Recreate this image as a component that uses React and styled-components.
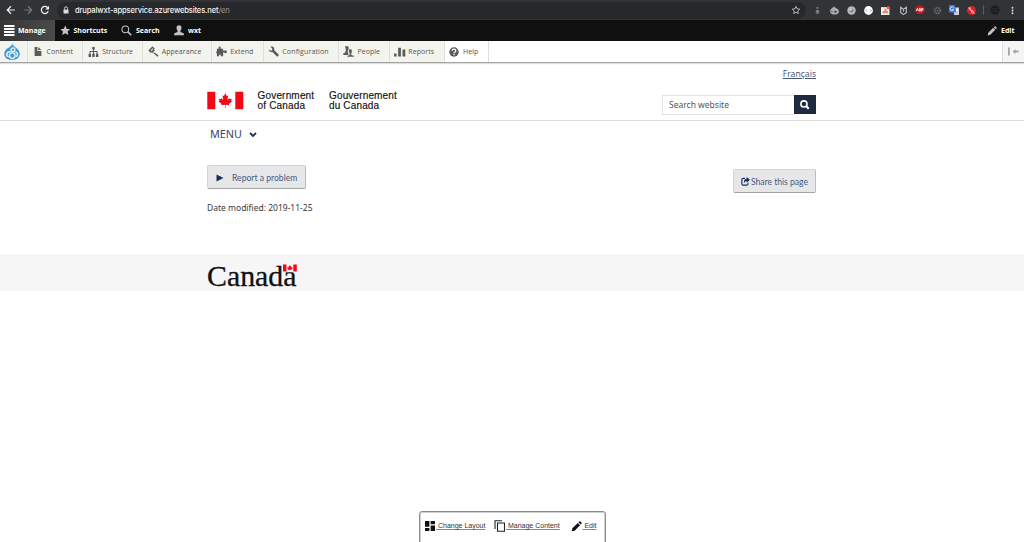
import React from "react";
import styled, { createGlobalStyle } from "styled-components";

const Global = createGlobalStyle`
  * { box-sizing: border-box; }
  html, body { margin: 0; padding: 0; background: #fff; }
  body { width: 1024px; height: 542px; overflow: hidden; font-family: "Noto Sans", sans-serif; color: #333; }
  a { color: inherit; }
  svg { display: block; flex: none; }
`;

const Page = styled.div`
  position: relative;
  display: flex;
  flex-direction: column;
  width: 1024px;
  height: 542px;
`;

const Label = styled.span`
  white-space: nowrap;
  letter-spacing: ${(p) => p.$track || 0}px;
`;

/* Browser chrome */
const BrowserBar = styled.div`
  display: flex;
  align-items: center;
  height: 20px;
  background: #323337;
  padding-left: 6px;
`;
const NavIcons = styled.div`
  display: flex;
  gap: 7px;
  width: 51px;
`;
const AddressBar = styled.div`
  display: flex;
  align-items: center;
  width: 749px;
  height: 17px;
  border-radius: 9px;
  background: #27282b;
  padding: 0 6px 0 6px;
  color: #9a9b9e;
  font: 7.6px/17px Inter, "Liberation Sans", sans-serif;
`;
const Host = styled.span`
  color: #f4f4f4;
  font-weight: 500;
  margin-left: 6px;
`;
const StarSlot = styled.div`
  margin-left: auto;
`;
const Extensions = styled.div`
  display: flex;
  align-items: center;
  margin-left: 3px;
`;
const ExtensionSlot = styled.div`
  display: flex;
  justify-content: center;
  width: ${(p) => p.$w || 17.1}px;
`;

/* Admin toolbar */
const AdminBar = styled.nav`
  display: flex;
  align-items: stretch;
  height: 21px;
  background: #101010;
  color: #fff;
  font: 700 7px/20px "Open Sans", sans-serif;
`;
const AdminTab = styled.div`
  display: flex;
  align-items: center;
  gap: ${(p) => p.$gap || 3}px;
  width: ${(p) => p.$w}px;
  padding-left: ${(p) => p.$pad || 0}px;
  margin-left: ${(p) => (p.$end ? "auto" : 0)};
  background: ${(p) => (p.$active ? "linear-gradient(90deg, #363636, #4a4a4a)" : "none")};
`;
const Tray = styled.nav`
  display: flex;
  height: 22px;
  background: #fff;
  border-bottom: 1px solid #a4a4a4;
  box-shadow: 0 1px 1px #ddd;
  color: #555;
  font: 7px/20px "Open Sans", sans-serif;
`;
const TrayItem = styled.div`
  display: flex;
  align-items: center;
  gap: ${(p) => p.$gap || 4}px;
  width: ${(p) => p.$w}px;
  padding-left: ${(p) => p.$pad}px;
  background: ${(p) => (p.$plain ? "#fff" : "#f3f4ee")};
  border-right: 1px solid #dfdfdc;
`;
const TrayToggle = styled.div`
  display: flex;
  align-items: center;
  justify-content: center;
  width: 22px;
  margin-left: auto;
  background: #f5f5f5;
  border-left: 1px solid #ddd;
`;

/* Site */
const Header = styled.header`
  height: 58px;
  border-bottom: 1px solid #dedede;
  padding: 0 208px 0 207px;
`;
const LanguageRow = styled.div`
  display: flex;
  justify-content: flex-end;
  height: 22px;
  padding-top: 5px;
  color: #4a5875;
  font: 8.6px/12px "Noto Sans", sans-serif;
`;
const BrandRow = styled.div`
  display: flex;
  height: 30px;
  padding-top: 6px;
`;
const BrandText = styled.div`
  width: ${(p) => p.$w}px;
  color: #111;
  font: 10px/10px "Liberation Sans", sans-serif;
  -webkit-text-stroke: 0.15px #111;
`;
const FlagSlot = styled.div`
  width: 50.5px;
`;
const SearchForm = styled.form`
  display: flex;
  margin: 4px 0 0 auto;
  height: 20px;
`;
const SearchField = styled.div`
  width: 132px;
  border: 1px solid #e2e2e2;
  border-right: 0;
  padding-left: 6px;
  color: #555;
  font: 8.5px/17px "Noto Sans", sans-serif;
`;
const SearchButton = styled.div`
  display: flex;
  align-items: center;
  justify-content: center;
  width: 22px;
  height: 19px;
  background: #1f2940;
`;
const MenuRow = styled.div`
  display: flex;
  align-items: center;
  gap: 7px;
  height: 27px;
  padding-left: 210px;
  color: #34446a;
  font: 10.8px/26px "Noto Sans", sans-serif;
`;
const MenuLabel = styled.div`
  padding-bottom: 1px;
  line-height: 24px;
`;
const Main = styled.main`
  height: 106px;
  padding: 17px 208px 0 207px;
`;
const Actions = styled.div`
  display: flex;
  justify-content: space-between;
  align-items: flex-start;
`;
const Button = styled.div`
  display: flex;
  align-items: center;
  gap: ${(p) => p.$gap}px;
  width: ${(p) => p.$w}px;
  height: 24px;
  margin-top: ${(p) => p.$drop || 0}px;
  padding: 1px 0 0 ${(p) => p.$pad}px;
  background: #e6e7e9;
  border: 1px solid #d4d5d7;
  border-right-color: #bcbcbe;
  border-bottom-color: #a5a5a7;
  border-radius: 2px;
  color: #4a5a80;
  font: 8.6px/20px Lato, sans-serif;
`;
const Modified = styled.div`
  margin-top: 9px;
  color: #383838;
  font: 8.5px/12px "Noto Sans", sans-serif;
`;
const Footer = styled.footer`
  height: 37px;
  padding: 2px 0 0 207px;
  background: #f6f6f6;
`;

/* Floating layout toolbar */
const LayoutBar = styled.div`
  position: absolute;
  left: 419px;
  top: 511px;
  display: flex;
  align-items: center;
  width: 187px;
  height: 33px;
  padding: 0 0 3px 5px;
  border: 1px solid #8c8c8c;
  border-radius: 3px 3px 0 0;
  box-shadow: inset 0 0 0 1px #d0d0d0;
  background: #fff;
  color: #333;
  font: 7px/10px "Liberation Sans", sans-serif;
`;
const LayoutAction = styled.div`
  display: flex;
  align-items: center;
  gap: ${(p) => p.$gap}px;
  width: ${(p) => p.$w}px;
`;
const LayoutLink = styled.a`
  text-decoration: underline;
  text-decoration-color: #888;
  text-underline-offset: 1px;
  white-space: pre;
`;

const Icon = ({ w = 10, h, box = "0 0 16 16", fill = "#5a5a5a", children }) => (
  <svg width={w} height={h || w} viewBox={box} fill={fill}>{children}</svg>
);
const Arrow = ({ flip, color }) => (
  <Icon w={10} fill="none">
    <path d={flip ? "M2 8h12M8 2l6 6-6 6" : "M14 8H2M8 2L2 8l6 6"} stroke={color} strokeWidth="1.9" />
  </Icon>
);
const Reload = () => (
  <Icon w={10} fill="none">
    <path d="M13.2 10A5.7 5.7 0 1 1 12.6 4.7" stroke="#eee" strokeWidth="2" />
    <path d="M14.5 1v6h-6z" fill="#eee" />
  </Icon>
);
const Lock = () => (
  <Icon w={6} h={8} box="0 0 12 16" fill="#ddd">
    <path d="M1 7h10v8H1z" /><path d="M3 7V4.5a3 3 0 0 1 6 0V7" fill="none" stroke="#ddd" strokeWidth="1.7" />
  </Icon>
);
const STAR = "M8 .8l2.2 4.9 5.3.6-4 3.6 1.1 5.3L8 12.5l-4.6 2.7 1.1-5.3-4-3.6 5.3-.6z";
const Star = ({ outline }) => (
  <Icon w={outline ? 8 : 10.5} fill={outline ? "none" : "#c2c2c2"}>
    <path d={STAR} stroke={outline ? "#ddd" : "none"} strokeWidth="1.5" />
  </Icon>
);
const Pencil = ({ fill, w = 11 }) => (
  <Icon w={w} fill={fill}><path d="M1 15l1-4.3 7.9-7.9 3.3 3.3L5.3 14zM10.8 1.9L12 .8q.9-.8 1.8 0l1.4 1.4q.9.9 0 1.8l-1.1 1.1z" /></Icon>
);
const MapleLeaf = ({ x, y, s }) => (
  <path
    transform={`translate(${x} ${y}) scale(${s})`}
    fill="#f00a16"
    d="M0-68L-11-44Q-14-40-19-43L-27-47-20-12Q-18-4-24-9L-36-23-40-14Q-41-11-44-12L-60-15-55 1Q-54 4-58 6L-64 9-37 31Q-34 34-35 38L-38 46-5 41Q-2 41-2 44L-3 70H3L2 44Q2 41 5 41L38 46 35 38Q34 34 37 31L64 9 58 6Q54 4 55 1L60-15 44-12Q41-11 40-14L36-23 24-9Q18-4 20-12L27-47 19-43Q14-40 11-44Z"
  />
);
const Flag = () => (
  <svg width="37" height="19" viewBox="0 0 37 19">
    <path fill="#f00a16" d="M.3.7h8v17.6h-8zM28.300.7h8v17.6h-8z" />
    <MapleLeaf x={18.3} y={9.4} s={0.108} />
  </svg>
);
const Drupal = () => (
  <Icon w={16} h={17} box="0 0 16 17" fill="none">
    <path d="M8.300.3c.3 2.400 2 3 3.700 4.400 2 1.600 3.700 3.300 3.700 6.200 0 3.200-2.700 5.900-7.700 5.900S.3 14.100.3 10.900C.3 8 2 6.200 4.200 5 6.400 3.800 8 2.700 8.300.3z" fill="#3c98d6" />
    <circle cx="9" cy="6.800" r="1.900" stroke="#f3f4ee" strokeWidth="1.300" />
    <path d="M6.500 8.600Q3 9 2.700 11.500q.1 1.900 2 2.300M11.500 8.800q2 .9 2 2.700 0 1.600-1.600 2.100" stroke="#f3f4ee" strokeWidth="1.500" />
    <circle cx="8.300" cy="12.600" r="2.800" stroke="#f3f4ee" strokeWidth="1.300" fill="#3c98d6" />
  </Icon>
);
const Magnifier = ({ color, w, weight = 2, reach = 15 }) => (
  <Icon w={w} fill="none">
    <circle cx="6.3" cy="6.3" r="4.9" stroke={color} strokeWidth={weight} />
    <path d={`M10 10L${reach} ${reach}`} stroke={color} strokeWidth={weight + 0.8} />
  </Icon>
);
const Person = () => (
  <Icon w={10} h={11} box="0 0 16 17" fill="#c2c2c2">
    <path d="M8 0c3 0 4.200 2 3.900 4.800-.2 2-.9 3-1.600 4v2l5.200 2.200.5 3H0l.5-3 5.200-2.200v-2c-.7-1-1.400-2-1.600-4C3.800 2 5 0 8 0z" />
  </Icon>
);

const trayIcons = {
  content: <Icon w={8} h={9} box="0 0 14 16"><path d="M1 0h5v7h7v9H1zM7.5 0L13 5.500H7.500z" /></Icon>,
  structure: <Icon w={11} h={10} box="0 0 18 16"><path d="M7 0h4v4h-1.200v2.500h5.700V11H17v5h-4v-5h1V8H9.800v3H11v5H7v-5h1.200V8H4v3h1v5H1v-5h1.500V6.500h5.700V4H7z" /></Icon>,
  appearance: <Icon w={11}><path d="M.5 6.500L6.500.5 10 4 4 10z" /><path d="M3.600 6.400l3-3 1 1-3 3z" fill="#f3f4ee" /><path d="M8.800 5.200l1.200 1.200-2.700 2.700 1.200 1.200 1-1 5.800 4.500-1.500 1.700-5.300-4.500L5.200 9z" /></Icon>,
  extend: <Icon w={11.5} h={11}><path d="M1 4h2.500V2.500q-.5-1.800 1.500-1.800t1.500 1.800V4H10v3h1.500q.5-1 2-1 2 0 2 2.200t-2 2.300q-1.500 0-2-1H10V15H6.500v-1.500q0-1.200-1.200-1.200t-1.300 1.200V15H1v-4.500H0V8h1z" /></Icon>,
  config: <Icon w={11}><path d="M5.200.8A4.400 4.400 0 0 1 9.100 6l6.200 6.200q.7 1 0 2-.9 1.600-2.600.7L6.300 8.700A4.400 4.400 0 0 1 .8 4.500L3.500 7 6 6.200 6.300 4 3.500 1z" /></Icon>,
  people: <Icon w={11.5} h={11}><path d="M2.500.5h5L8 5 6.500 7v3l1 .8V13H0v-2l3-1.500L3 7.500 4 6z" /><path d="M8 4.500h4.300l.8 4-1.200 2.500v1.800l4.100 1.400V16H5.500v-1.800l3.500-1.400V11L7.800 8.500z" stroke="#f3f4ee" strokeWidth=".8" /></Icon>,
  reports: <Icon w={12} h={10} box="0 0 19 16"><path d="M0 10.500h4V15H0zM6.500 1h4.500v14H6.500zM13.500 4h4.500v11h-4.500z" /></Icon>,
  help: <Icon w={10}><circle cx="8" cy="8" r="7.500" /><path d="M5 6q.2-2.600 3-2.600T11 6q0 1.500-1.900 2.300-1 .5-1 1.500" fill="none" stroke="#fff" strokeWidth="2" /><circle cx="8.100" cy="12" r="1.300" fill="#fff" /></Icon>,
};

const trayItems = [
  { name: "Content", icon: "content", w: 55, pad: 6, gap: 4.5, track: 0.08 },
  { name: "Structure", icon: "structure", w: 60, pad: 5, gap: 3.2, track: 0.05 },
  { name: "Appearance", icon: "appearance", w: 68.5, pad: 4.5, gap: 3.2, track: 0.06 },
  { name: "Extend", icon: "extend", w: 52, pad: 4.5, gap: 2.8, track: 0.1 },
  { name: "Configuration", icon: "config", w: 75, pad: 4, gap: 3.8, track: 0.14 },
  { name: "People", icon: "people", w: 51, pad: 4.5, gap: 3, track: 0.04 },
  { name: "Reports", icon: "reports", w: 55, pad: 4.3, gap: 2.5, track: 0.05 },
  { name: "Help", icon: "help", w: 44, pad: 4.5, gap: 4, track: 0.08, plain: true },
];

const extensionIcons = [
  <Icon w={9} fill="#777a7c"><circle cx="8" cy="3.500" r="2" /><path d="M5 7h6v5l-2 2H7l-2-2z" /></Icon>,
  <Icon w={9} fill="#a8aaac"><path d="M7 1q2 2 5 3.500 4 2 4 5.500-1 5-8 5t-8-5Q0 6 3 4t4-3z" /><path d="M7 10q3-3 5 0-1 3-5 0zM2 9q2-1 3 1-2 2-3-1z" fill="#333" /></Icon>,
  <Icon w={9}><circle cx="8" cy="8" r="7.500" fill="#b8b8b8" /><circle cx="8" cy="8" r="4.800" fill="#858585" stroke="#ddd" /><path d="M4 6l4-2 1 2-3 3z" fill="#ddd" /></Icon>,
  <Icon w={9}><circle cx="8" cy="8" r="7.800" fill="#fff" /><path d="M5 6L3 8 5 10M11 6l2 2-2 2" stroke="#777" strokeWidth="1.300" fill="none" /></Icon>,
  <Icon w={9}><path d="M0 2h15v14H0z" fill="#eee" /><path d="M2 13l2-4h2V5h4v4h2l1 4z" fill="#e98770" /><circle cx="13" cy="3" r="2.800" fill="#f44e34" /></Icon>,
  <Icon w={9} fill="none"><path d="M3 2l5 4 5-4v10l-5 3-5-3zM8 6v4" stroke="#bbb" strokeWidth="2" /></Icon>,
  <Icon w={9.5} fill="#c91820"><path d="M5 1h6l5 4v6l-5 4H5l-5-4V5z" /><path d="M2 10l2-4 1.500 4M7 6v4h2V6zM11 11V6h2.500v2.500H11" stroke="#fff" strokeWidth="1.300" fill="none" /></Icon>,
  <Icon w={9} fill="none"><circle cx="8" cy="8" r="5" stroke="#5d6062" strokeWidth="4" strokeDasharray="3 1" /><circle cx="8" cy="8" r="1.500" fill="#66696b" /></Icon>,
  <Icon w={10}><path d="M7 4h9v12H8z" fill="#ccd0d5" /><path d="M0 0h9l3 12H0z" fill="#4178df" /><path d="M7.500 4.500a3 3 0 1 0 0 3H5M11 8h4M13 6v2q0 3-2 4" stroke="#fff" strokeWidth="1.300" fill="none" /></Icon>,
  <Icon w={9}><circle cx="8" cy="8" r="8" fill="#d4232d" /><path d="M3 4l3 4V3zM8 8v4l4 1-1-4zM3 2l11 12" stroke="#f5c8ca" strokeWidth="1.200" fill="none" /></Icon>,
];

export default function App() {
  return (
    <Page>
      <Global />
      <BrowserBar>
        <NavIcons><Arrow color="#eee" /><Arrow flip color="#77797c" /><Reload /></NavIcons>
        <AddressBar>
          <Lock />
          <Host><Label $track={-0.15}>drupalwxt-appservice.azurewebsites.net</Label></Host>
          <Label $track={-0.1}>/en</Label>
          <StarSlot><Star outline /></StarSlot>
        </AddressBar>
        <Extensions>
          {extensionIcons.map((icon, i) => <ExtensionSlot key={i}>{icon}</ExtensionSlot>)}
          <ExtensionSlot $w={7}><Icon w={1} h={10} box="0 0 1 10"><path d="M0 0h1v10H0z" /></Icon></ExtensionSlot>
          <ExtensionSlot $w={17}><Icon w={10} fill="#1e1f21"><circle cx="8" cy="8" r="7.500" /><path d="M3 6h10M3 10h10" stroke="#333" strokeDasharray="2 1" /></Icon></ExtensionSlot>
          <ExtensionSlot><Icon w={9} fill="#ddd"><circle cx="8" cy="3" r="1.700" /><circle cx="8" cy="8" r="1.700" /><circle cx="8" cy="13" r="1.700" /></Icon></ExtensionSlot>
        </Extensions>
      </BrowserBar>

      <AdminBar>
        <AdminTab $w={55} $pad={4} $gap={3.5} $active>
          <Icon w={10.5} h={11} box="0 0 10.5 11" fill="#fff"><path d="M0 0h10.500v2H0zM0 3h10.500v2H0zM0 6h10.500v2H0zM0 9h10.500v2H0z" /></Icon>
          <Label>Manage</Label>
        </AdminTab>
        <AdminTab $w={61} $pad={5}><Star /><Label>Shortcuts</Label></AdminTab>
        <AdminTab $w={53} $pad={5} $gap={4}><Magnifier color="#c2c2c2" w={11} weight={1.5} /><Label>Search</Label></AdminTab>
        <AdminTab $w={60} $pad={5} $gap={4}><Person /><Label>wxt</Label></AdminTab>
        <AdminTab $w={37} $gap={4} $end><Pencil fill="#c2c2c2" w={10} /><Label>Edit</Label></AdminTab>
      </AdminBar>

      <Tray>
        <TrayItem $w={28} $pad={4}><Drupal /></TrayItem>
        {trayItems.map((item) => (
          <TrayItem key={item.name} $w={item.w} $pad={item.pad} $gap={item.gap} $plain={item.plain}>
            {trayIcons[item.icon]}<Label $track={item.track}>{item.name}</Label>
          </TrayItem>
        ))}
        <TrayToggle>
          <Icon w={11} h={9} box="0 0 11 9" fill="#a5a5a5"><path d="M0 0.500h1.800v8H0zM4.500 4.500L7.500 2v1.400h3v2.200h-3V7z" /></Icon>
        </TrayToggle>
      </Tray>

      <Header>
        <LanguageRow><a href="#fr"><Label>Français</Label></a></LanguageRow>
        <BrandRow>
          <FlagSlot><Flag /></FlagSlot>
          <BrandText $w={71.5}><Label $track={0.18}>Government<br />of Canada</Label></BrandText>
          <BrandText $w={80}><Label $track={0.15}>Gouvernement<br />du Canada</Label></BrandText>
          <SearchForm>
            <SearchField><Label>Search website</Label></SearchField>
            <SearchButton><Magnifier color="#fff" w={10} weight={2.5} reach={14} /></SearchButton>
          </SearchForm>
        </BrandRow>
      </Header>
      <MenuRow>
        <MenuLabel>MENU</MenuLabel>
        <Icon w={8} h={6} box="0 0 8 6" fill="none"><path d="M1 1l3 3 3-3" stroke="#1d2e54" strokeWidth="1.800" /></Icon>
      </MenuRow>
      <Main>
        <Actions>
          <Button $w={99} $pad={8} $gap={8}>
            <Icon w={8} h={8} box="0 0 8 8" fill="#17305f"><path d="M.5.500L7.500 4 .5 7.500z" /></Icon>
            <Label>Report a problem</Label>
          </Button>
          <Button $w={83} $pad={7} $gap={1} $drop={4}>
            <Icon w={9} fill="none">
              <path d="M7 2.500H4Q1.500 2.500 1.500 5v7q0 2.500 2.500 2.500h6q2.500 0 2.500-2.500v-2" stroke="#17305f" strokeWidth="2" />
              <path d="M10 0l6 5-6 5V7q-3.500 0-4.500 4Q4 3.500 10 3z" fill="#17305f" />
            </Icon>
            <Label $track={-0.02}>Share this page</Label>
          </Button>
        </Actions>
        <Modified><Label>Date modified: 2019-11-25</Label></Modified>
      </Main>
      <Footer>
        <svg width="94" height="35" viewBox="0 0 94 35">
          <text x="0" y="29.5" fontFamily="Liberation Serif, serif" fontSize="29" textLength="89.5" lengthAdjust="spacingAndGlyphs" fill="#111" stroke="#111" strokeWidth=".3">Canada</text>
          <path fill="#f6f6f6" d="M75.500 7h16v9.200h-16z" />
          <path fill="#f00a16" d="M76 8.500h3.500v7H76zM86.300 8.500h3.500v7h-3.500z" />
          <MapleLeaf x={82.9} y={11.9} s={0.046} />
        </svg>
      </Footer>

      <LayoutBar>
        <LayoutAction $w={69} $gap={1}>
          <Icon w={10} fill="#111"><path d="M0 0h7v9H0zM9 0h7v5H9zM9 7h7v9H9zM0 11h7v5H0z" /></Icon>
          <LayoutLink href="#layout"> Change Layout</LayoutLink>
        </LayoutAction>
        <LayoutAction $w={76.5} $gap={1}>
          <Icon w={11} h={12} box="0 0 11 12" fill="none"><path d="M3.500 3h7v8.300h-7zM1 9V.8h7" stroke="#222" strokeWidth="1.100" /></Icon>
          <LayoutLink href="#content"> Manage Content</LayoutLink>
        </LayoutAction>
        <LayoutAction $w={30} $gap={1}>
          <Pencil fill="#111" />
          <LayoutLink href="#edit"> Edit</LayoutLink>
        </LayoutAction>
      </LayoutBar>
    </Page>
  );
}
